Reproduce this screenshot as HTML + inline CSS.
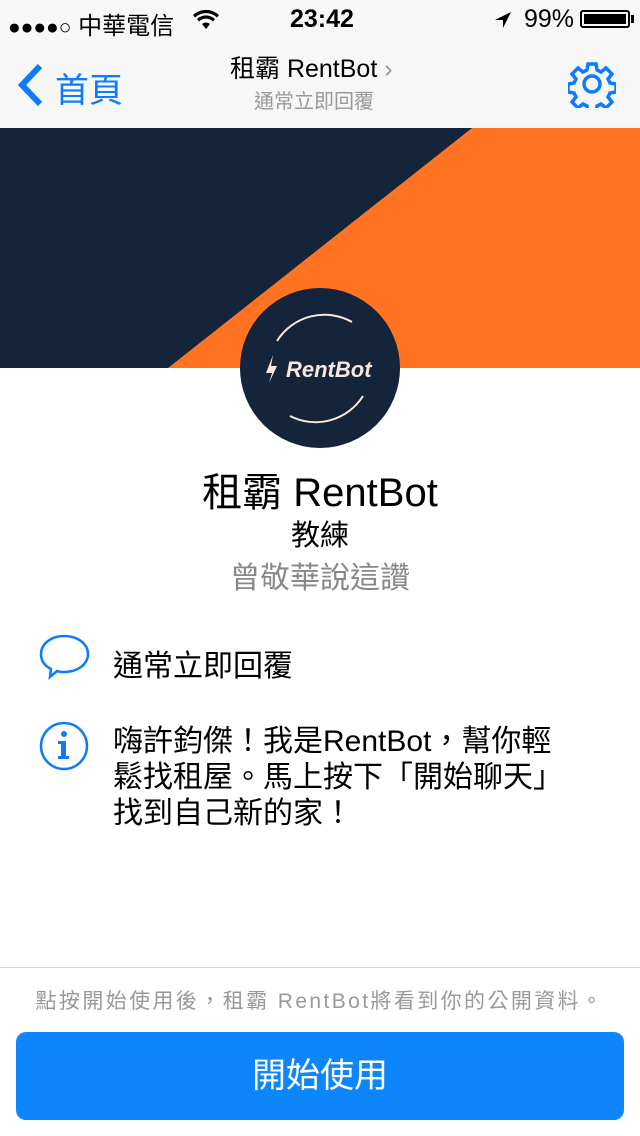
<!DOCTYPE html><html><head><meta charset="utf-8"><style>
body{margin:0;width:640px;height:1136px;position:relative;background:#fff;font-family:"Liberation Sans","Noto Sans CJK TC",sans-serif;overflow:hidden}
.a{position:absolute}
</style></head><body>
<div class="a" style="left:0;top:0;width:640px;height:128px;background:#f7f7f7"></div>
<div class="a" style="left:8px;top:6px;font-size:24px;color:#000"><span style="font-size:21px">●●●●○</span> 中華電信</div>
<svg class="a" style="left:193px;top:10px" width="26" height="20" viewBox="0 0 26 20"><path d="M13 19 L9 14 A6 6 0 0 1 17 14Z M4 9 A13 13 0 0 1 22 9 L20 11.5 A10 10 0 0 0 6 11.5Z M0 5 A19 19 0 0 1 26 5 L24 7.5 A16 16 0 0 0 2 7.5Z" fill="#000"/></svg>
<div class="a" style="left:290px;top:5px;font-size:25px;font-weight:bold">23:42</div>
<svg class="a" style="left:493px;top:10px" width="20" height="20"><path d="M18 2 L2 10 L10 10 L10 18Z" fill="#000"/></svg>
<div class="a" style="left:524px;top:5px;font-size:25px">99%</div>
<div class="a" style="left:580px;top:10px;width:50px;height:18px;border:2px solid #000;border-radius:3px;box-sizing:border-box;padding:2px"><div style="background:#000;width:100%;height:100%"></div></div>
<div class="a" style="left:631px;top:15px;width:3px;height:8px;background:#000"></div>
<svg class="a" style="left:14px;top:64px" width="30" height="42"><path d="M26 2 L8 21 L26 40" stroke="#0e7cfa" stroke-width="6" fill="none"/></svg>
<div class="a" style="left:55px;top:63px;font-size:34px;color:#0e7cfa">首頁</div>
<div class="a" style="left:230px;top:49px;font-size:25px;color:#000">租霸 RentBot <span style="color:#999">›</span></div>
<div class="a" style="left:254px;top:85px;font-size:20px;color:#999">通常立即回覆</div>
<svg class="a" style="left:568px;top:60px" width="48" height="48" viewBox="0 0 48 48"><g fill="none" stroke="#0e7cfa" stroke-width="3.5"><circle cx="24" cy="24" r="8"/><path d="M20 4h8l1 6 4 2 5-4 6 6-4 5 2 4 6 1v8l-6 1-2 4 4 5-6 6-5-4-4 2-1 6h-8l-1-6-4-2-5 4-6-6 4-5-2-4-6-1v-8l6-1 2-4-4-5 6-6 5 4 4-2z"/></g></svg>
<svg class="a" style="left:0;top:128px" width="640" height="240"><rect width="640" height="240" fill="#ff7322"/><path d="M0 0 L472 0 L168 240 L0 240Z" fill="#14243a"/></svg>
<div class="a" style="left:240px;top:288px;width:160px;height:160px;border-radius:50%;background:#14243a"></div>
<svg class="a" style="left:240px;top:288px" width="160" height="160"><g fill="none" stroke="#fbe8dc" stroke-width="2"><path d="M37 53 A56 56 0 0 1 112 34"/><path d="M123 108 A56 56 0 0 1 50 128"/></g><path d="M33 67 L26 85 L32 85 L29 95 L37 78 L31 78Z" fill="#fbe8dc"/></svg>
<div class="a" style="left:286px;top:357px;font-size:22px;font-weight:bold;font-style:italic;color:#fbe8dc">RentBot</div>
<div class="a" style="left:0;top:460px;width:640px;text-align:center;font-size:40px">租霸 RentBot</div>
<div class="a" style="left:0;top:512px;width:640px;text-align:center;font-size:29px">教練</div>
<div class="a" style="left:0;top:553px;width:640px;text-align:center;font-size:30px;color:#888">曾敬華說這讚</div>
<svg class="a" style="left:38px;top:632px" width="54" height="54"><path d="M26 4 C40 4 50 12 50 22 C50 32 40 40 26 40 C23 40 21 40 19 39 L12 45 L13 37 C7 34 3 29 3 22 C3 12 13 4 26 4Z" fill="none" stroke="#0e7cfa" stroke-width="2.5"/></svg>
<div class="a" style="left:113px;top:641px;font-size:30px">通常立即回覆</div>
<svg class="a" style="left:38px;top:720px" width="52" height="52"><circle cx="26" cy="26" r="23" fill="none" stroke="#0e7cfa" stroke-width="2.5"/><circle cx="26" cy="14" r="3" fill="#0e7cfa"/><path d="M20 21h8v15h3v3H20v-3h3V24h-3z" fill="#0e7cfa"/></svg>
<div class="a" style="left:113px;top:724px;font-size:30px;line-height:36px;width:480px">嗨許鈞傑！我是RentBot，幫你輕<br>鬆找租屋。馬上按下「開始聊天」<br>找到自己新的家！</div>
<div class="a" style="left:0;top:967px;width:640px;height:1px;background:#d6d6d6"></div>
<div class="a" style="left:0;top:985px;width:640px;text-align:center;font-size:21px;letter-spacing:2.4px;color:#999">點按開始使用後，租霸 RentBot將看到你的公開資料。</div>
<div class="a" style="left:16px;top:1032px;width:608px;height:88px;border-radius:10px;background:#0e86fb;color:#fff;font-size:34px;text-align:center;line-height:88px">開始使用</div>
</body></html>
